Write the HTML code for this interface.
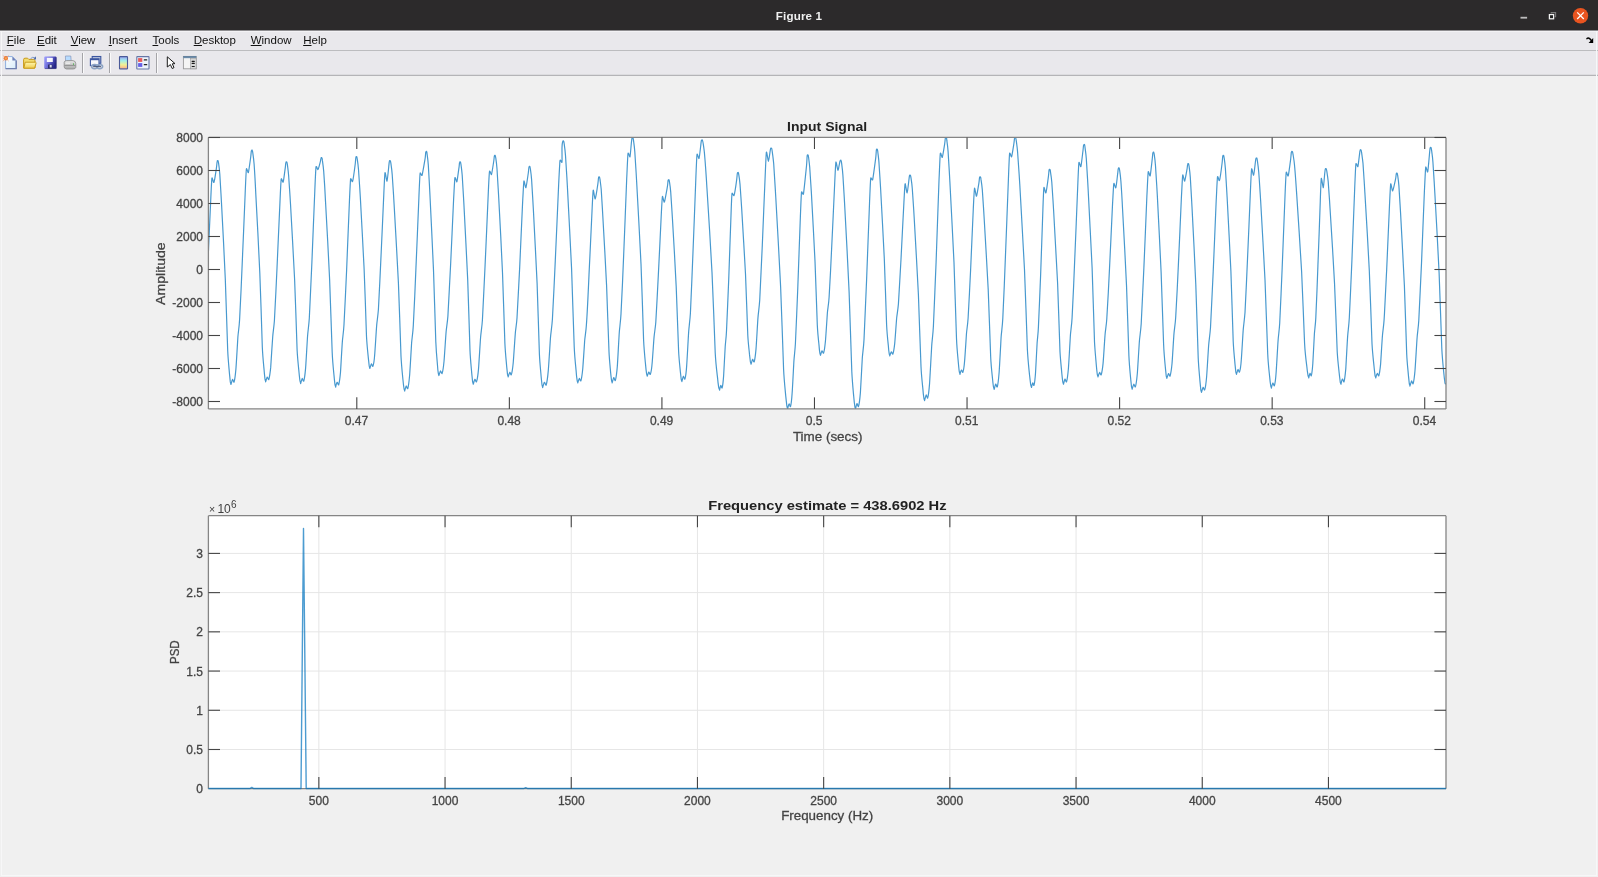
<!DOCTYPE html>
<html><head><meta charset="utf-8"><title>Figure 1</title>
<style>
html,body{margin:0;padding:0;}
body{width:1598px;height:877px;overflow:hidden;background:#f0f0f0;position:relative;font-family:"Liberation Sans",sans-serif;}
#titlebar{position:absolute;left:0;top:0;width:1598px;height:30px;background:#2c2a2b;}
#titlebar .t{position:absolute;left:0;width:1598px;top:9px;text-align:center;color:#f0f0f0;font-weight:bold;font-size:11.6px;letter-spacing:0.15px;line-height:14px;}
#menubar{position:absolute;left:0;top:30px;width:1598px;height:20px;background:#e9e8ec;border-top:0;}
#menubar .hl{position:absolute;left:0;top:1px;width:1598px;height:1px;background:#f3f2f5;}
#menubar .sh{position:absolute;left:0;top:0;width:1598px;height:1px;background:#8e8d90;}
#menubar span{position:absolute;top:4px;font-size:11.5px;line-height:12px;color:#111;}
#mline{position:absolute;left:0;top:50px;width:1598px;height:1px;background:#bcbcbf;}
#toolbar{position:absolute;left:0;top:51px;width:1598px;height:24px;background:#e9e8ec;}
#tline1{position:absolute;left:0;top:74px;width:1598px;height:1px;background:#dcdcdf;}
#tline2{position:absolute;left:0;top:75px;width:1598px;height:1px;background:#b4b4b7;}
#lcol{position:absolute;left:1px;top:31px;width:1px;height:845px;background:#f7f7f8;}
#bline{position:absolute;left:1px;top:875px;width:1596px;height:1px;background:#f7f7f8;}
#rcol{position:absolute;left:1596px;top:31px;width:1px;height:845px;background:#f7f7f8;}
svg{position:absolute;left:0;top:0;will-change:transform;}
#menubar,#titlebar{will-change:transform;}
svg text{font-family:"Liberation Sans",sans-serif;}
svg text.t{stroke:#4a4a4a;stroke-width:0.3px;}

.g{will-change:transform;}
</style></head><body>
<div id="titlebar"><div class="t">Figure 1</div></div>

<svg width="90" height="30" viewBox="0 0 90 30" style="position:absolute;left:1508px;top:0">
<rect x="12.5" y="16.8" width="6.6" height="1.8" fill="#bdbdbd"/>
<path d="M43.2 13.6 V12.6 H47.6 V16.8 H46.6" fill="none" stroke="#7a7a7a" stroke-width="1.1"/>
<rect x="41.4" y="14.6" width="4.2" height="4.2" fill="#1e1e1e" stroke="#f2f2f2" stroke-width="1.25"/>
<circle cx="72.5" cy="15.7" r="7.7" fill="#e95420"/>
<path d="M69.2 12.4 L75.8 19 M75.8 12.4 L69.2 19" stroke="#fff" stroke-width="1.25"/>
</svg>
<div id="menubar"><div class="sh"></div><div class="hl"></div>
<span style="left:6.8px"><u>F</u>ile</span>
<span style="left:37px"><u>E</u>dit</span>
<span style="left:70.7px"><u>V</u>iew</span>
<span style="left:108.7px"><u>I</u>nsert</span>
<span style="left:152.5px"><u>T</u>ools</span>
<span style="left:193.7px"><u>D</u>esktop</span>
<span style="left:250.7px"><u>W</u>indow</span>
<span style="left:303.2px"><u>H</u>elp</span>
</div>

<svg width="12" height="10" viewBox="0 0 12 10" style="position:absolute;left:1584px;top:35px">
<path d="M3 3.6 Q4.2 2.2 5.6 3.6 L7.4 5.6" fill="none" stroke="#000" stroke-width="1.5" stroke-linecap="round"/>
<path d="M9.2 3 L9.2 8 L4.6 8 Z" fill="#000"/>
</svg>
<div id="mline"></div>
<div id="toolbar"></div>
<div id="tline1"></div><div id="tline2"></div>
<div id="lcol"></div><div id="rcol"></div><div id="bline"></div>

<svg width="200" height="24" viewBox="0 0 200 24" style="position:absolute;left:0;top:51px">
<defs>
<linearGradient id="gpage" x1="0" y1="0" x2="1" y2="1"><stop offset="0" stop-color="#ffffff"/><stop offset="1" stop-color="#d8ecfa"/></linearGradient>
<linearGradient id="gfold" x1="0" y1="0" x2="0" y2="1"><stop offset="0" stop-color="#fff8b0"/><stop offset="1" stop-color="#f0cc50"/></linearGradient>
<linearGradient id="gflop" x1="0" y1="0" x2="1" y2="0.4"><stop offset="0" stop-color="#a4a4ff"/><stop offset="0.5" stop-color="#6a6ad8"/><stop offset="1" stop-color="#26268a"/></linearGradient>
<linearGradient id="gprn" x1="0" y1="0" x2="0" y2="1"><stop offset="0" stop-color="#e8e8e8"/><stop offset="1" stop-color="#a8a8a8"/></linearGradient>
<linearGradient id="gcbar" x1="0" y1="0" x2="0" y2="1"><stop offset="0" stop-color="#98a0f2"/><stop offset="0.33" stop-color="#a0f0ea"/><stop offset="0.66" stop-color="#f2f092"/><stop offset="0.88" stop-color="#f8c28e"/><stop offset="1" stop-color="#a08098"/></linearGradient>
<linearGradient id="gtb" x1="0" y1="0" x2="0" y2="1"><stop offset="0" stop-color="#4f7598"/><stop offset="1" stop-color="#7a98b4"/></linearGradient>
</defs>
<!-- new -->
<path d="M5.6 5.6 H12.4 L16.2 9.4 V17.6 H5.6 Z" fill="url(#gpage)" stroke="#8fb0e0" stroke-width="1"/>
<path d="M16.2 9.4 V17.6 H5.6" fill="none" stroke="#6f7fae" stroke-width="1.4"/>
<path d="M12.4 5.6 L16.2 9.4 H12.4 Z" fill="#7080b8"/>
<circle cx="5.8" cy="7.3" r="2.2" fill="#ee7a38"/>
<circle cx="5.8" cy="7.3" r="0.9" fill="#f8d040"/>
<path d="M2.8 4.4 L8.8 10.2 M8.8 4.4 L2.8 10.2" stroke="#f29a6a" stroke-width="0.6"/>
<!-- open -->
<path d="M23.6 8.6 Q23.6 7.2 25 7.2 H27.6 L28.8 8.4 H33.8 Q35 8.4 35 9.6 V17 H23.6 Z" fill="#f2dc70" stroke="#c99a1a" stroke-width="1"/>
<path d="M25.2 11.2 H35.6 Q36.4 11.4 36 12.4 L34.6 17.2 H23.8 Z" fill="url(#gfold)" stroke="#c99a1a" stroke-width="1"/>
<path d="M30.6 7.6 Q32.6 5.4 35 6.8" fill="none" stroke="#7f9ac8" stroke-width="1"/>
<path d="M36 5.2 L36 8.6 L33.4 8.2 Z" fill="#4a68a8"/>
<!-- save -->
<rect x="44.2" y="5.6" width="12.2" height="12.2" rx="1" fill="url(#gflop)"/>
<path d="M44.8 17.6 H56.2 V6.4" fill="none" stroke="#2a2a70" stroke-width="0.8" opacity="0.7"/>
<rect x="46.8" y="6.8" width="6" height="4.2" fill="#f8f8fc"/>
<rect x="48" y="13.6" width="4.4" height="3.8" fill="#2a2a6a"/>
<rect x="49.7" y="13.9" width="2" height="2.6" fill="#d8dcf0"/>
<!-- print -->
<path d="M65.4 5 H70.8 L71.2 10 H65.6 Z" fill="#b8dcff" stroke="#7a8ab0" stroke-width="0.6"/>
<path d="M64.2 11.2 Q64.6 9.6 66.6 9.6 H73 Q75.8 10 75.8 12.6 V16.4 Q75.4 18 73 18 H66.6 Q64.2 17.6 64.2 16 Z" fill="url(#gprn)" stroke="#8a8a8a" stroke-width="0.8"/>
<path d="M64.6 14.4 H75.4" stroke="#7a7a7a" stroke-width="0.7"/>
<path d="M65.6 12.2 L70 12.2" stroke="#f8f8f8" stroke-width="0.9"/>
<rect x="73" y="12.4" width="1" height="1.4" fill="#4cb04c"/>
<!-- sep -->
<rect x="109" y="2" width="1" height="20" fill="#a4a4a8"/>
<rect x="110" y="2" width="1" height="20" fill="#fafafa"/>
<rect x="82" y="2" width="1" height="20" fill="#a4a4a8"/>
<rect x="83" y="2" width="1" height="20" fill="#fafafa"/>
<rect x="156" y="2" width="1" height="20" fill="#a4a4a8"/>
<rect x="157" y="2" width="1" height="20" fill="#fafafa"/>
<!-- link/preview -->
<rect x="92.2" y="5.5" width="8.6" height="6.8" fill="#b4bed8" stroke="#3b56a0" stroke-width="1.1"/>
<rect x="90.4" y="7.8" width="8.6" height="6.8" fill="#f8f8fc" stroke="#3b56a0" stroke-width="1.1"/>
<rect x="90.4" y="7.8" width="8.6" height="1.4" fill="#3b56a0"/>
<ellipse cx="94.6" cy="15.6" rx="3" ry="2" fill="none" stroke="#8ea4c4" stroke-width="1.6"/>
<ellipse cx="99.6" cy="15.6" rx="3" ry="2" fill="none" stroke="#8ea4c4" stroke-width="1.6"/>
<path d="M93.2 15.6 H101" stroke="#3c4a6a" stroke-width="0.9"/>
<!-- colorbar -->
<rect x="119.5" y="5.6" width="8" height="12.4" rx="0.6" fill="url(#gcbar)" stroke="#4a5a98" stroke-width="1.1"/>
<!-- legend -->
<rect x="136.8" y="5.6" width="12.2" height="12.4" rx="0.5" fill="#eef4fc" stroke="#6676a6" stroke-width="1.1"/>
<rect x="138.1" y="7.1" width="4.2" height="3.8" fill="#e85a5a"/>
<rect x="138.1" y="12.1" width="4.2" height="3.8" fill="#6660e6"/>
<rect x="143.7" y="8.2" width="3.6" height="1.3" rx="0.6" fill="#222"/>
<rect x="143.7" y="13" width="3.6" height="1.3" rx="0.6" fill="#222"/>
<!-- arrow -->
<path d="M167.3 5.8 L167.3 16 L170.4 13.6 L172.2 17.5 L174 16.6 L172.3 12.8 L175 12.6 Z" fill="#fff" stroke="#1a1a1a" stroke-width="1" stroke-linejoin="round"/>
<!-- inspector -->
<rect x="183.4" y="5.4" width="12.8" height="12.4" fill="#f4f4f4" stroke="#9a9a9c" stroke-width="0.9"/>
<rect x="183.2" y="5.2" width="13.2" height="2" fill="url(#gtb)"/>
<rect x="190.6" y="7.2" width="5.6" height="10.6" fill="#d6d6d6" stroke="#9a9a9c" stroke-width="0.6"/>
<rect x="191.6" y="9.8" width="3.2" height="1.2" rx="0.5" fill="#1a1a1a"/>
<rect x="191.6" y="11.8" width="3.2" height="1.2" rx="0.5" fill="#1a1a1a"/>
<rect x="191.6" y="14.9" width="3.2" height="1.2" rx="0.5" fill="#1a1a1a"/>
</svg>
<svg width="1598" height="877" viewBox="0 0 1598 877" style="top:0">
<rect x="208.4" y="137.4" width="1237.6" height="271.55999999999995" fill="#fff"/>
<rect x="208.4" y="515.7" width="1237.6" height="273.0" fill="#fff"/>
<line x1="318.85" y1="515.70" x2="318.85" y2="788.70" stroke="#e6e6e6" stroke-width="1" />
<line x1="445.05" y1="515.70" x2="445.05" y2="788.70" stroke="#e6e6e6" stroke-width="1" />
<line x1="571.25" y1="515.70" x2="571.25" y2="788.70" stroke="#e6e6e6" stroke-width="1" />
<line x1="697.45" y1="515.70" x2="697.45" y2="788.70" stroke="#e6e6e6" stroke-width="1" />
<line x1="823.65" y1="515.70" x2="823.65" y2="788.70" stroke="#e6e6e6" stroke-width="1" />
<line x1="949.85" y1="515.70" x2="949.85" y2="788.70" stroke="#e6e6e6" stroke-width="1" />
<line x1="1076.05" y1="515.70" x2="1076.05" y2="788.70" stroke="#e6e6e6" stroke-width="1" />
<line x1="1202.25" y1="515.70" x2="1202.25" y2="788.70" stroke="#e6e6e6" stroke-width="1" />
<line x1="1328.45" y1="515.70" x2="1328.45" y2="788.70" stroke="#e6e6e6" stroke-width="1" />
<line x1="208.40" y1="749.49" x2="1446.00" y2="749.49" stroke="#e6e6e6" stroke-width="1" />
<line x1="208.40" y1="710.27" x2="1446.00" y2="710.27" stroke="#e6e6e6" stroke-width="1" />
<line x1="208.40" y1="671.06" x2="1446.00" y2="671.06" stroke="#e6e6e6" stroke-width="1" />
<line x1="208.40" y1="631.84" x2="1446.00" y2="631.84" stroke="#e6e6e6" stroke-width="1" />
<line x1="208.40" y1="592.62" x2="1446.00" y2="592.62" stroke="#e6e6e6" stroke-width="1" />
<line x1="208.40" y1="553.41" x2="1446.00" y2="553.41" stroke="#e6e6e6" stroke-width="1" />
<clipPath id="c1"><rect x="208.4" y="137.4" width="1237.6" height="271.55999999999995"/></clipPath>
<path d="M196.30 383.86C196.5 383.4 197.5 379.5 197.9 379.3C198.2 379.1 199.1 382.8 199.4 381.8C199.8 380.8 200.9 373.8 201.3 369.5C201.7 365.1 202.9 343.3 203.3 338.6C203.7 333.9 204.6 329.1 205.0 322.2C205.5 315.2 207.1 280.8 207.7 268.7C208.2 256.5 210.2 209.9 210.7 200.8C211.1 191.8 211.6 180.0 211.9 178.2C212.2 176.3 213.4 183.5 213.9 182.4C214.4 181.3 216.2 169.6 216.5 167.4C216.8 165.3 217.0 161.8 217.2 161.2C217.4 160.5 218.0 160.5 218.1 160.7C218.2 160.9 218.4 162.0 218.6 163.4C218.8 164.7 219.5 170.1 219.8 174.1C220.1 178.1 220.9 192.6 221.5 203.1C222.1 213.6 224.7 264.4 225.3 279.1C225.9 293.9 227.3 341.2 227.7 350.6C228.1 360.0 229.2 369.9 229.4 373.0C229.7 376.1 230.2 380.8 230.3 381.9C230.5 383.0 230.9 383.9 231.0 384.2C231.1 384.4 230.8 384.6 231.0 384.2C231.2 383.7 232.2 379.6 232.5 379.4C232.8 379.2 233.7 383.0 234.1 382.0C234.4 381.0 235.5 373.6 235.9 369.1C236.3 364.6 237.6 341.8 237.9 336.8C238.3 331.9 239.2 326.9 239.6 319.6C240.1 312.3 241.7 276.4 242.2 263.7C242.8 251.0 244.8 202.1 245.2 192.7C245.6 183.2 246.1 171.0 246.4 169.0C246.7 167.0 248.0 173.7 248.4 172.5C248.8 171.3 250.4 159.2 250.7 157.1C251.0 154.9 251.2 151.3 251.4 150.7C251.6 150.0 252.2 149.9 252.3 150.2C252.4 150.4 252.6 151.5 252.8 152.9C253.0 154.3 253.8 159.9 254.1 164.0C254.4 168.2 255.3 183.2 255.8 194.1C256.4 205.0 259.2 257.5 259.8 272.8C260.5 288.1 261.9 337.1 262.3 346.8C262.7 356.5 263.8 366.7 264.1 370.0C264.3 373.2 264.9 378.1 265.0 379.2C265.2 380.4 265.6 381.3 265.7 381.5C265.8 381.8 265.5 382.0 265.7 381.5C265.9 381.1 266.9 377.3 267.2 377.1C267.6 376.9 268.5 380.5 268.8 379.5C269.1 378.5 270.3 371.6 270.7 367.4C271.0 363.1 272.3 341.7 272.7 337.0C273.0 332.3 273.9 327.7 274.4 320.8C274.8 313.9 276.5 280.1 277.0 268.2C277.6 256.2 279.5 210.3 280.0 201.4C280.4 192.5 280.9 181.0 281.2 179.1C281.5 177.2 282.8 183.2 283.2 182.1C283.6 181.0 284.9 170.3 285.2 168.3C285.5 166.4 285.7 163.1 285.9 162.5C286.1 161.8 286.7 161.8 286.8 162.0C286.9 162.2 287.2 163.3 287.4 164.6C287.5 166.0 288.3 171.3 288.6 175.2C288.9 179.2 289.9 193.6 290.5 204.0C291.1 214.4 293.9 264.6 294.6 279.2C295.3 293.8 296.7 340.8 297.1 350.1C297.6 359.3 298.7 369.1 299.0 372.2C299.3 375.3 299.8 379.9 300.0 381.0C300.2 382.1 300.6 383.0 300.7 383.2C300.8 383.5 300.5 383.7 300.7 383.2C300.9 382.8 301.9 378.7 302.2 378.5C302.5 378.3 303.4 382.1 303.8 381.1C304.1 380.0 305.2 372.7 305.6 368.1C306.0 363.6 307.2 340.7 307.6 335.7C308.0 330.7 308.8 325.7 309.3 318.4C309.7 311.0 311.3 274.9 311.9 262.2C312.4 249.4 314.4 200.4 314.8 190.9C315.2 181.3 315.7 169.2 316.0 167.1C316.3 164.9 317.6 170.0 318.0 169.5C318.4 169.0 320.0 163.1 320.3 161.9C320.6 160.8 320.8 158.6 321.0 158.2C321.2 157.7 321.8 157.4 321.9 157.7C322.0 157.9 322.3 159.0 322.4 160.4C322.6 161.8 323.4 167.3 323.7 171.4C324.0 175.5 325.0 190.4 325.5 201.2C326.1 212.0 329.0 264.0 329.6 279.1C330.3 294.3 331.7 342.8 332.2 352.5C332.6 362.1 333.7 372.2 334.0 375.4C334.3 378.6 334.8 383.4 335.0 384.6C335.2 385.7 335.6 386.6 335.7 386.9C335.8 387.1 335.6 387.3 335.7 386.9C335.8 386.4 336.9 382.5 337.2 382.3C337.5 382.1 338.4 385.8 338.7 384.8C339.0 383.8 340.1 376.7 340.5 372.3C340.8 367.9 342.0 345.9 342.4 341.1C342.8 336.4 343.6 331.6 344.0 324.5C344.5 317.5 346.0 282.8 346.6 270.5C347.1 258.2 349.0 211.1 349.4 201.9C349.8 192.8 350.3 181.1 350.6 179.1C350.9 177.0 352.1 182.9 352.6 181.4C353.1 179.9 354.9 166.7 355.2 164.3C355.5 161.8 355.7 158.0 355.9 157.3C356.1 156.5 356.7 156.6 356.8 156.8C356.9 157.0 357.1 158.0 357.3 159.3C357.5 160.6 358.2 165.7 358.5 169.5C358.8 173.2 359.7 187.0 360.3 196.9C360.8 206.9 363.5 254.9 364.1 268.8C364.8 282.8 366.1 327.6 366.5 336.4C367.0 345.3 368.0 354.6 368.3 357.6C368.6 360.5 369.1 365.0 369.2 366.0C369.4 367.1 369.8 367.9 369.9 368.2C370.0 368.4 369.7 368.6 369.9 368.2C370.1 367.7 371.1 364.0 371.4 363.9C371.7 363.7 372.6 367.1 372.9 366.2C373.3 365.3 374.4 358.6 374.7 354.5C375.1 350.4 376.3 329.6 376.7 325.1C377.1 320.6 377.9 316.1 378.4 309.5C378.8 302.8 380.4 270.2 380.9 258.6C381.5 247.1 383.4 202.7 383.8 194.1C384.2 185.5 384.7 173.9 385.0 172.6C385.3 171.3 386.6 181.6 387.0 181.1C387.4 180.5 388.5 169.1 388.7 167.1C388.9 165.1 389.2 161.8 389.4 161.2C389.6 160.5 390.2 160.5 390.3 160.7C390.4 160.9 390.7 162.1 390.9 163.4C391.1 164.8 391.9 170.4 392.2 174.5C392.5 178.6 393.5 193.6 394.1 204.4C394.7 215.2 397.7 267.4 398.4 282.6C399.1 297.8 400.6 346.6 401.0 356.2C401.5 365.9 402.6 376.0 402.9 379.3C403.2 382.5 403.8 387.3 404.0 388.5C404.1 389.6 404.6 390.5 404.7 390.8C404.8 391.0 404.5 391.2 404.7 390.8C404.9 390.3 405.9 386.2 406.2 386.0C406.5 385.8 407.4 389.6 407.8 388.6C408.1 387.5 409.2 380.1 409.6 375.5C410.0 371.0 411.3 348.0 411.6 343.0C412.0 338.0 412.9 333.0 413.3 325.6C413.8 318.2 415.4 281.9 415.9 269.1C416.5 256.3 418.5 206.9 418.9 197.4C419.3 187.8 419.8 175.7 420.1 173.5C420.4 171.3 421.6 176.7 422.1 175.2C422.6 173.7 424.7 161.0 425.1 158.7C425.5 156.4 425.6 152.7 425.8 152.0C426.0 151.2 426.6 151.2 426.7 151.5C426.8 151.7 427.0 152.8 427.1 154.1C427.3 155.5 428.0 160.9 428.3 164.9C428.5 168.9 429.4 183.5 429.9 194.0C430.4 204.5 432.9 255.3 433.5 270.1C434.1 284.9 435.4 332.4 435.8 341.8C436.2 351.2 437.1 361.0 437.4 364.2C437.6 367.3 438.1 372.0 438.3 373.1C438.4 374.2 438.8 375.1 438.9 375.4C439.0 375.6 438.7 375.8 438.9 375.4C439.1 374.9 440.2 371.2 440.5 371.0C440.8 370.8 441.7 374.3 442.1 373.4C442.5 372.4 443.6 365.7 444.0 361.5C444.4 357.4 445.7 336.4 446.1 331.9C446.5 327.3 447.4 322.8 447.9 316.1C448.3 309.4 450.0 276.4 450.6 264.7C451.2 253.1 453.2 208.2 453.6 199.5C454.1 190.8 454.6 179.6 454.9 177.8C455.2 176.0 456.5 182.6 456.9 181.7C457.3 180.7 458.6 170.1 458.9 168.2C459.2 166.3 459.4 163.1 459.6 162.5C459.8 161.8 460.4 161.8 460.5 162.0C460.6 162.2 460.8 163.3 461.0 164.6C461.2 166.0 461.9 171.3 462.2 175.3C462.5 179.2 463.3 193.7 463.9 204.1C464.4 214.6 467.1 265.0 467.7 279.6C468.3 294.3 469.6 341.3 470.0 350.7C470.4 360.0 471.5 369.7 471.7 372.9C472.0 376.0 472.5 380.6 472.6 381.7C472.8 382.8 473.2 383.7 473.3 384.0C473.4 384.2 473.1 384.4 473.3 384.0C473.5 383.5 474.6 379.5 474.9 379.3C475.2 379.1 476.2 382.9 476.5 381.8C476.9 380.8 478.1 373.5 478.5 369.1C478.9 364.6 480.2 342.1 480.6 337.2C481.0 332.3 481.9 327.5 482.4 320.2C482.8 313.0 484.5 277.6 485.1 265.0C485.7 252.5 487.8 204.3 488.2 194.9C488.6 185.6 489.2 173.6 489.5 171.6C489.8 169.5 491.1 175.5 491.5 174.5C491.9 173.5 493.4 163.4 493.7 161.5C494.0 159.7 494.2 156.6 494.4 156.0C494.6 155.4 495.2 155.2 495.3 155.5C495.4 155.7 495.6 156.8 495.8 158.1C496.0 159.4 496.7 164.8 497.0 168.7C497.3 172.7 498.1 187.1 498.7 197.5C499.3 207.9 501.9 258.1 502.5 272.7C503.1 287.3 504.5 334.2 504.9 343.5C505.3 352.8 506.4 362.5 506.6 365.6C506.9 368.7 507.4 373.3 507.5 374.4C507.7 375.5 508.1 376.4 508.2 376.6C508.3 376.9 508.0 377.1 508.2 376.6C508.4 376.2 509.5 372.5 509.8 372.3C510.1 372.1 511.0 375.6 511.3 374.7C511.7 373.7 512.8 367.1 513.2 363.0C513.6 358.8 514.9 338.1 515.3 333.6C515.6 329.1 516.6 324.6 517.0 318.0C517.4 311.3 519.1 278.7 519.7 267.1C520.2 255.6 522.2 211.2 522.6 202.6C523.1 194.0 523.6 182.6 523.9 181.1C524.2 179.6 525.5 188.5 525.9 187.7C526.3 186.9 528.0 175.1 528.3 173.0C528.6 171.0 528.8 167.5 529.0 166.9C529.2 166.2 529.8 166.2 529.9 166.4C530.0 166.6 530.2 167.7 530.4 169.0C530.6 170.4 531.3 175.7 531.6 179.6C531.9 183.6 532.7 198.0 533.3 208.3C533.8 218.7 536.5 268.9 537.1 283.4C537.7 298.0 539.0 344.8 539.4 354.1C539.8 363.4 540.9 373.1 541.1 376.2C541.4 379.3 541.9 383.9 542.0 385.0C542.2 386.1 542.6 387.0 542.7 387.2C542.8 387.5 542.5 387.7 542.7 387.2C542.9 386.7 544.1 382.5 544.4 382.3C544.8 382.0 545.8 386.1 546.2 385.0C546.5 383.9 547.8 376.1 548.2 371.4C548.7 366.6 550.1 342.6 550.5 337.4C550.9 332.2 551.9 327.0 552.4 319.3C552.9 311.6 554.7 273.7 555.3 260.4C556.0 247.0 558.1 195.6 558.6 185.6C559.1 175.6 559.7 163.0 560.0 160.7C560.3 158.3 561.8 163.5 562.0 162.2C562.2 160.9 561.9 149.7 562.0 147.6C562.1 145.5 562.5 142.1 562.7 141.5C562.9 140.8 563.5 140.7 563.6 141.0C563.7 141.2 564.0 142.4 564.2 143.9C564.4 145.3 565.2 151.2 565.5 155.5C565.8 159.8 566.8 175.5 567.4 186.9C568.0 198.2 570.9 253.1 571.6 269.1C572.2 285.0 573.7 336.2 574.2 346.4C574.6 356.5 575.8 367.2 576.1 370.6C576.3 373.9 576.9 379.0 577.1 380.2C577.2 381.4 577.7 382.4 577.8 382.6C577.9 382.9 577.6 383.1 577.8 382.6C578.0 382.2 579.0 378.6 579.3 378.4C579.6 378.2 580.5 381.6 580.9 380.7C581.2 379.8 582.3 373.2 582.7 369.2C583.1 365.1 584.4 344.8 584.7 340.3C585.1 335.9 586.0 331.5 586.4 324.9C586.9 318.4 588.5 286.3 589.0 274.9C589.6 263.6 591.6 219.9 592.0 211.5C592.4 203.0 592.9 191.6 593.2 190.3C593.5 189.0 594.7 199.5 595.2 198.8C595.7 198.2 597.6 185.8 597.9 183.7C598.2 181.6 598.4 178.1 598.6 177.4C598.8 176.7 599.4 176.7 599.5 176.9C599.6 177.1 599.8 178.1 600.0 179.4C600.1 180.6 600.9 185.6 601.2 189.2C601.4 192.9 602.3 206.3 602.8 216.0C603.4 225.7 606.0 272.4 606.6 285.9C607.2 299.5 608.5 343.1 609.0 351.8C609.4 360.4 610.4 369.5 610.6 372.4C610.9 375.2 611.4 379.6 611.6 380.6C611.7 381.6 612.1 382.4 612.2 382.6C612.3 382.9 612.0 383.2 612.2 382.6C612.4 382.1 613.5 377.8 613.8 377.6C614.1 377.4 615.0 381.5 615.4 380.4C615.7 379.3 616.9 371.4 617.3 366.6C617.7 361.8 618.9 337.5 619.3 332.2C619.7 327.0 620.6 321.7 621.0 313.9C621.5 306.1 623.2 267.8 623.7 254.3C624.3 240.8 626.3 188.8 626.7 178.7C627.2 168.6 627.7 155.7 628.0 153.5C628.3 151.3 629.7 157.8 630.0 156.8C630.3 155.8 631.1 145.5 631.3 143.7C631.5 141.8 631.8 138.6 632.0 138.0C632.2 137.4 632.8 137.3 632.9 137.5C633.0 137.8 633.3 138.9 633.5 140.4C633.7 141.8 634.5 147.6 634.8 151.8C635.1 156.1 636.1 171.6 636.7 182.8C637.3 194.0 640.3 248.2 641.0 263.9C641.7 279.7 643.2 330.2 643.6 340.3C644.1 350.3 645.2 360.8 645.5 364.1C645.8 367.5 646.4 372.5 646.6 373.7C646.7 374.9 647.2 375.8 647.3 376.0C647.4 376.3 647.1 376.4 647.3 376.0C647.5 375.7 648.5 372.3 648.8 372.1C649.1 371.9 650.0 375.1 650.3 374.3C650.7 373.4 651.8 367.3 652.1 363.5C652.5 359.7 653.7 340.7 654.1 336.6C654.5 332.4 655.3 328.3 655.8 322.2C656.2 316.1 657.8 286.1 658.3 275.6C658.9 265.0 660.8 224.2 661.2 216.3C661.6 208.5 662.1 198.0 662.4 196.6C662.7 195.2 663.9 203.1 664.4 202.1C664.9 201.1 667.0 188.9 667.4 186.7C667.8 184.5 667.9 181.0 668.1 180.3C668.3 179.6 668.9 179.6 669.0 179.8C669.1 180.0 669.3 181.0 669.5 182.2C669.7 183.4 670.4 188.3 670.7 191.9C671.0 195.5 671.8 208.6 672.4 218.1C673.0 227.5 675.6 273.3 676.2 286.6C676.8 299.9 678.2 342.6 678.6 351.0C679.0 359.5 680.1 368.4 680.3 371.2C680.6 374.0 681.1 378.2 681.2 379.2C681.4 380.3 681.8 381.1 681.9 381.3C682.0 381.5 681.7 381.8 681.9 381.3C682.1 380.8 683.1 376.5 683.4 376.3C683.7 376.0 684.6 380.1 684.9 379.0C685.3 377.9 686.4 370.1 686.7 365.4C687.1 360.6 688.3 336.6 688.7 331.4C689.1 326.1 689.9 320.9 690.4 313.2C690.8 305.5 692.4 267.6 692.9 254.2C693.5 240.9 695.4 189.4 695.8 179.4C696.2 169.4 696.7 156.6 697.0 154.5C697.3 152.4 698.6 159.3 699.0 158.5C699.4 157.6 700.5 147.8 700.7 146.0C700.9 144.2 701.2 141.1 701.4 140.5C701.6 140.0 702.1 139.8 702.3 140.0C702.5 140.3 702.8 141.5 703.1 143.0C703.3 144.5 704.3 150.6 704.6 155.0C705.0 159.5 706.2 175.8 706.9 187.5C707.7 199.3 711.2 256.0 712.0 272.4C712.9 288.9 714.7 341.9 715.2 352.4C715.7 362.9 717.1 373.9 717.5 377.4C717.8 380.9 718.5 386.1 718.7 387.4C718.9 388.6 719.5 389.6 719.6 389.9C719.7 390.1 719.5 390.3 719.6 389.9C719.7 389.4 720.6 385.7 720.8 385.5C721.1 385.3 721.8 388.8 722.1 387.9C722.4 387.0 723.3 380.2 723.6 376.1C723.9 372.0 724.9 351.2 725.2 346.7C725.5 342.2 726.2 337.7 726.5 331.0C726.9 324.3 728.2 291.5 728.7 280.0C729.1 268.4 730.7 223.8 731.0 215.2C731.3 206.6 731.7 195.6 732.0 193.6C732.3 191.6 733.5 196.9 734.0 195.5C734.5 194.1 736.4 181.9 736.7 179.6C737.0 177.4 737.2 173.8 737.4 173.1C737.6 172.4 738.2 172.4 738.3 172.6C738.4 172.8 738.6 173.7 738.8 174.9C739.0 176.0 739.7 180.7 740.0 184.1C740.3 187.5 741.1 200.0 741.7 208.9C742.2 217.9 744.9 261.4 745.5 274.0C746.1 286.6 747.4 327.2 747.8 335.2C748.2 343.3 749.3 351.7 749.5 354.4C749.8 357.1 750.3 361.1 750.4 362.0C750.6 363.0 751.0 363.8 751.1 364.0C751.2 364.1 750.9 364.4 751.1 364.0C751.3 363.5 752.3 359.5 752.6 359.3C752.9 359.1 753.8 362.9 754.2 361.8C754.5 360.8 755.6 353.6 756.0 349.1C756.4 344.7 757.6 322.2 758.0 317.4C758.4 312.5 759.2 307.6 759.7 300.4C760.1 293.2 761.7 257.8 762.3 245.3C762.8 232.9 764.8 184.8 765.2 175.5C765.6 166.1 766.1 153.6 766.4 152.2C766.7 150.7 768.1 161.3 768.4 161.4C768.8 161.4 769.7 154.1 769.9 152.8C770.1 151.5 770.4 149.1 770.6 148.6C770.8 148.2 771.3 147.9 771.5 148.2C771.7 148.4 772.0 149.7 772.2 151.3C772.4 152.8 773.3 159.1 773.7 163.8C774.0 168.4 775.1 185.4 775.8 197.7C776.5 209.9 779.8 269.0 780.6 286.2C781.4 303.4 783.1 358.7 783.6 369.6C784.1 380.5 785.4 392.0 785.7 395.6C786.1 399.3 786.7 404.8 786.9 406.1C787.1 407.4 787.6 408.4 787.7 408.7C787.8 408.9 787.6 409.1 787.7 408.7C787.8 408.2 788.8 404.1 789.1 403.9C789.4 403.7 790.2 407.5 790.5 406.5C790.8 405.5 791.8 398.1 792.1 393.5C792.5 389.0 793.6 366.0 793.9 361.1C794.2 356.1 795.0 351.1 795.4 343.8C795.8 336.4 797.3 300.3 797.8 287.5C798.3 274.7 800.0 225.6 800.4 216.1C800.8 206.6 801.2 194.5 801.5 192.3C801.8 190.0 803.0 196.2 803.5 193.6C804.0 191.0 806.1 169.8 806.5 166.0C806.9 162.2 807.0 156.7 807.2 155.6C807.4 154.5 808.0 154.9 808.1 155.1C808.2 155.3 808.4 156.3 808.6 157.5C808.7 158.7 809.4 163.5 809.7 167.1C810.0 170.6 810.8 183.7 811.4 193.1C811.9 202.5 814.4 247.9 815.0 261.1C815.6 274.3 816.9 316.7 817.3 325.1C817.7 333.5 818.7 342.3 819.0 345.1C819.2 347.9 819.7 352.1 819.9 353.1C820.0 354.1 820.4 354.9 820.5 355.1C820.6 355.3 820.3 355.5 820.5 355.1C820.7 354.6 821.7 351.0 822.0 350.8C822.3 350.6 823.2 354.0 823.6 353.1C823.9 352.2 825.0 345.6 825.4 341.5C825.8 337.5 827.1 317.0 827.4 312.6C827.8 308.2 828.7 303.7 829.1 297.2C829.6 290.6 831.2 258.4 831.7 247.0C832.3 235.6 834.3 191.8 834.7 183.3C835.1 174.8 835.6 163.4 835.9 162.1C836.2 160.8 837.6 170.1 837.9 170.3C838.3 170.5 839.2 165.0 839.4 164.1C839.6 163.1 839.9 161.1 840.1 160.8C840.3 160.4 840.9 160.0 841.0 160.3C841.1 160.5 841.4 161.8 841.6 163.2C841.8 164.7 842.6 170.7 842.9 175.2C843.2 179.6 844.2 195.8 844.8 207.5C845.5 219.1 848.4 275.5 849.1 291.9C849.8 308.3 851.3 361.0 851.8 371.4C852.3 381.8 853.4 392.8 853.7 396.3C854.0 399.7 854.6 404.9 854.8 406.2C854.9 407.4 855.4 408.4 855.5 408.7C855.6 408.9 855.3 409.2 855.5 408.7C855.7 408.2 856.7 403.8 857.0 403.6C857.3 403.4 858.2 407.5 858.5 406.4C858.9 405.3 860.0 397.4 860.4 392.6C860.7 387.7 862.0 363.3 862.3 358.0C862.7 352.7 863.6 347.4 864.0 339.6C864.4 331.8 866.0 293.4 866.6 279.8C867.1 266.2 869.1 213.9 869.5 203.8C869.9 193.7 870.4 180.9 870.7 178.5C871.0 176.1 872.2 181.6 872.7 179.5C873.2 177.5 875.3 161.1 875.7 158.2C876.1 155.2 876.2 150.6 876.4 149.8C876.6 148.9 877.2 149.1 877.3 149.3C877.4 149.5 877.6 150.5 877.8 151.7C877.9 153.0 878.6 158.0 878.9 161.6C879.2 165.3 880.0 178.8 880.6 188.5C881.1 198.2 883.7 245.0 884.3 258.6C884.9 272.3 886.2 316.0 886.6 324.7C887.0 333.4 888.0 342.4 888.3 345.3C888.5 348.2 889.0 352.6 889.2 353.6C889.3 354.6 889.7 355.4 889.8 355.6C889.9 355.9 889.6 356.0 889.8 355.6C890.0 355.3 891.0 352.0 891.3 351.9C891.6 351.7 892.5 354.8 892.9 353.9C893.2 353.1 894.3 347.2 894.7 343.6C895.1 340.0 896.3 321.8 896.7 317.8C897.1 313.9 897.9 309.9 898.4 304.1C898.8 298.2 900.4 269.5 901.0 259.3C901.5 249.2 903.5 210.2 903.9 202.6C904.3 195.0 904.8 184.6 905.1 183.7C905.4 182.7 906.7 193.2 907.1 192.9C907.5 192.6 908.6 182.7 908.8 180.9C909.0 179.2 909.3 176.3 909.5 175.7C909.7 175.1 910.3 175.0 910.4 175.2C910.5 175.4 910.8 176.5 911.0 177.9C911.2 179.2 912.0 184.7 912.3 188.7C912.6 192.7 913.6 207.4 914.2 218.0C914.8 228.5 917.7 279.7 918.4 294.5C919.0 309.4 920.5 357.1 921.0 366.6C921.4 376.0 922.6 385.9 922.9 389.1C923.1 392.2 923.7 397.0 923.9 398.1C924.0 399.2 924.5 400.1 924.6 400.3C924.7 400.6 924.4 400.9 924.6 400.3C924.8 399.8 925.9 395.2 926.2 394.9C926.5 394.7 927.4 399.1 927.7 397.9C928.1 396.7 929.2 388.3 929.6 383.1C930.0 377.9 931.3 351.7 931.7 346.0C932.0 340.4 933.0 334.7 933.4 326.3C933.8 317.9 935.5 276.7 936.1 262.1C936.6 247.5 938.6 191.5 939.0 180.6C939.5 169.8 940.0 155.8 940.3 153.5C940.6 151.1 941.9 158.3 942.3 157.4C942.7 156.4 944.4 145.6 944.7 143.7C945.0 141.7 945.2 138.5 945.4 137.8C945.6 137.2 946.2 137.1 946.3 137.3C946.4 137.6 946.7 138.8 946.8 140.2C947.0 141.6 947.8 147.3 948.1 151.6C948.4 155.8 949.3 171.2 949.9 182.3C950.5 193.4 953.3 247.2 954.0 262.8C954.6 278.4 956.1 328.6 956.5 338.5C956.9 348.5 958.0 358.9 958.3 362.2C958.6 365.5 959.1 370.5 959.3 371.7C959.5 372.9 959.9 373.8 960.0 374.0C960.1 374.3 959.9 374.5 960.0 374.0C960.1 373.6 961.2 370.1 961.5 370.0C961.7 369.8 962.6 373.1 962.9 372.2C963.2 371.3 964.3 364.9 964.6 361.0C965.0 357.1 966.2 337.5 966.5 333.2C966.9 328.9 967.7 324.6 968.1 318.3C968.5 312.0 970.1 281.0 970.6 270.0C971.1 259.1 972.9 216.9 973.3 208.7C973.7 200.6 974.2 189.6 974.5 188.3C974.8 187.1 976.1 196.7 976.5 196.2C976.9 195.7 978.6 184.9 978.9 183.0C979.2 181.2 979.4 178.0 979.6 177.4C979.8 176.8 980.4 176.7 980.5 176.9C980.6 177.1 980.9 178.2 981.0 179.4C981.2 180.7 982.0 185.8 982.3 189.6C982.6 193.4 983.5 207.2 984.1 217.2C984.7 227.2 987.5 275.4 988.2 289.4C988.8 303.4 990.3 348.4 990.7 357.3C991.1 366.2 992.2 375.6 992.5 378.5C992.8 381.5 993.3 386.0 993.5 387.0C993.7 388.1 994.1 388.9 994.2 389.1C994.3 389.4 994.0 389.7 994.2 389.1C994.4 388.6 995.4 384.2 995.7 384.0C996.0 383.7 996.9 387.9 997.3 386.8C997.6 385.7 998.7 377.6 999.1 372.7C999.5 367.7 1000.8 342.7 1001.1 337.3C1001.5 331.9 1002.4 326.5 1002.8 318.4C1003.3 310.4 1004.9 271.1 1005.4 257.2C1006.0 243.3 1008.0 189.8 1008.4 179.4C1008.8 169.0 1009.3 155.7 1009.6 153.5C1009.9 151.2 1011.2 157.8 1011.6 156.8C1012.0 155.8 1013.6 145.4 1013.9 143.5C1014.2 141.6 1014.4 138.5 1014.6 137.8C1014.8 137.2 1015.3 137.1 1015.5 137.3C1015.7 137.6 1016.0 138.8 1016.2 140.3C1016.4 141.8 1017.3 147.9 1017.6 152.3C1018.0 156.8 1019.1 173.1 1019.8 184.8C1020.4 196.6 1023.7 253.3 1024.5 269.8C1025.3 286.3 1026.9 339.3 1027.4 349.8C1027.9 360.3 1029.2 371.3 1029.5 374.8C1029.9 378.3 1030.5 383.5 1030.7 384.7C1030.9 386.0 1031.4 387.0 1031.5 387.2C1031.6 387.5 1031.4 387.7 1031.5 387.2C1031.6 386.8 1032.5 383.1 1032.7 382.9C1033.0 382.7 1033.7 386.2 1034.0 385.3C1034.3 384.3 1035.2 377.5 1035.5 373.3C1035.8 369.1 1036.8 347.9 1037.1 343.3C1037.4 338.8 1038.1 334.2 1038.4 327.4C1038.8 320.6 1040.1 287.3 1040.6 275.5C1041.0 263.7 1042.6 218.4 1042.9 209.6C1043.2 200.9 1043.6 189.4 1043.9 187.7C1044.2 186.0 1045.5 194.0 1045.9 192.9C1046.4 191.8 1048.1 179.0 1048.4 176.7C1048.7 174.4 1048.9 170.7 1049.1 170.0C1049.3 169.3 1049.9 169.3 1050.0 169.5C1050.1 169.7 1050.4 170.8 1050.5 172.1C1050.7 173.3 1051.5 178.5 1051.8 182.3C1052.1 186.2 1053.0 200.1 1053.6 210.2C1054.1 220.3 1056.9 269.0 1057.6 283.2C1058.2 297.3 1059.6 342.8 1060.0 351.8C1060.5 360.8 1061.6 370.2 1061.8 373.2C1062.1 376.2 1062.6 380.7 1062.8 381.8C1063.0 382.9 1063.4 383.7 1063.5 384.0C1063.6 384.2 1063.3 384.4 1063.5 384.0C1063.7 383.5 1064.7 379.3 1065.0 379.1C1065.3 378.9 1066.2 382.8 1066.6 381.7C1066.9 380.7 1068.0 373.1 1068.4 368.5C1068.8 363.8 1070.1 340.4 1070.4 335.3C1070.8 330.2 1071.7 325.1 1072.1 317.6C1072.6 310.0 1074.2 273.1 1074.7 260.0C1075.3 247.0 1077.3 196.7 1077.7 187.0C1078.1 177.3 1078.6 164.7 1078.9 162.7C1079.2 160.6 1080.5 167.7 1080.9 166.6C1081.3 165.5 1082.6 153.5 1082.9 151.4C1083.2 149.2 1083.4 145.7 1083.6 145.1C1083.8 144.4 1084.4 144.3 1084.5 144.6C1084.6 144.8 1084.9 146.0 1085.0 147.3C1085.2 148.7 1086.0 154.4 1086.3 158.5C1086.6 162.6 1087.5 177.8 1088.1 188.7C1088.6 199.6 1091.4 252.2 1092.1 267.6C1092.7 282.9 1094.1 332.1 1094.5 341.8C1095.0 351.6 1096.1 361.8 1096.3 365.0C1096.6 368.3 1097.1 373.2 1097.3 374.3C1097.5 375.5 1097.9 376.4 1098.0 376.6C1098.1 376.9 1097.8 377.1 1098.0 376.6C1098.2 376.2 1099.3 372.6 1099.6 372.4C1099.9 372.2 1100.8 375.6 1101.2 374.7C1101.5 373.8 1102.7 367.2 1103.1 363.1C1103.5 359.1 1104.7 338.6 1105.1 334.2C1105.5 329.8 1106.4 325.3 1106.8 318.8C1107.3 312.2 1109.0 280.0 1109.5 268.6C1110.1 257.2 1112.1 213.4 1112.5 204.9C1113.0 196.4 1113.5 185.4 1113.8 183.7C1114.1 182.0 1115.4 188.6 1115.8 187.7C1116.2 186.7 1117.4 176.1 1117.6 174.2C1117.9 172.3 1118.1 169.1 1118.3 168.5C1118.5 167.8 1119.1 167.8 1119.2 168.0C1119.3 168.2 1119.5 169.3 1119.7 170.6C1119.9 172.0 1120.6 177.3 1120.9 181.2C1121.2 185.2 1122.1 199.6 1122.6 210.0C1123.2 220.3 1125.9 270.5 1126.5 285.1C1127.1 299.7 1128.5 346.5 1128.9 355.8C1129.3 365.1 1130.3 374.8 1130.6 377.9C1130.9 381.0 1131.4 385.6 1131.5 386.7C1131.7 387.8 1132.1 388.7 1132.2 389.0C1132.3 389.2 1132.0 389.4 1132.2 389.0C1132.4 388.5 1133.5 384.4 1133.8 384.2C1134.1 384.0 1135.0 387.8 1135.4 386.8C1135.8 385.7 1136.9 378.3 1137.3 373.8C1137.7 369.2 1139.0 346.2 1139.4 341.2C1139.8 336.2 1140.7 331.2 1141.2 323.8C1141.6 316.4 1143.3 280.2 1143.9 267.4C1144.5 254.6 1146.5 205.3 1146.9 195.8C1147.4 186.2 1147.9 173.9 1148.2 171.9C1148.5 169.9 1149.8 177.0 1150.2 175.8C1150.6 174.5 1151.9 161.7 1152.2 159.4C1152.5 157.1 1152.7 153.4 1152.9 152.7C1153.1 151.9 1153.7 151.9 1153.8 152.2C1153.9 152.4 1154.1 153.5 1154.3 154.9C1154.5 156.2 1155.2 161.7 1155.5 165.7C1155.8 169.7 1156.7 184.5 1157.3 195.1C1157.8 205.7 1160.5 257.0 1161.1 271.9C1161.8 286.8 1163.1 334.7 1163.6 344.2C1164.0 353.7 1165.0 363.6 1165.3 366.8C1165.6 369.9 1166.1 374.7 1166.2 375.8C1166.4 376.9 1166.8 377.8 1166.9 378.0C1167.0 378.3 1166.7 378.5 1166.9 378.0C1167.1 377.6 1168.2 373.8 1168.5 373.6C1168.8 373.4 1169.7 377.0 1170.1 376.0C1170.4 375.0 1171.6 368.1 1172.0 363.8C1172.4 359.6 1173.6 338.1 1174.0 333.4C1174.4 328.8 1175.3 324.1 1175.7 317.2C1176.2 310.3 1177.9 276.4 1178.4 264.4C1179.0 252.5 1181.0 206.4 1181.4 197.5C1181.9 188.6 1182.4 176.8 1182.7 175.2C1183.0 173.5 1184.3 181.7 1184.7 181.1C1185.1 180.5 1186.7 171.0 1187.0 169.4C1187.3 167.7 1187.5 164.7 1187.7 164.2C1187.9 163.6 1188.5 163.4 1188.6 163.7C1188.7 163.9 1188.9 165.0 1189.1 166.4C1189.3 167.8 1190.0 173.3 1190.3 177.4C1190.6 181.4 1191.4 196.3 1192.0 207.1C1192.6 217.8 1195.2 269.6 1195.8 284.7C1196.4 299.8 1197.8 348.2 1198.2 357.8C1198.6 367.4 1199.7 377.4 1199.9 380.6C1200.2 383.8 1200.7 388.6 1200.8 389.8C1201.0 390.9 1201.4 391.8 1201.5 392.0C1201.6 392.3 1201.3 392.5 1201.5 392.0C1201.7 391.6 1202.8 387.5 1203.1 387.3C1203.4 387.1 1204.3 390.9 1204.7 389.9C1205.1 388.9 1206.2 381.5 1206.6 377.0C1207.0 372.5 1208.3 349.7 1208.7 344.7C1209.1 339.8 1210.0 334.8 1210.5 327.5C1210.9 320.2 1212.6 284.3 1213.2 271.6C1213.8 258.9 1215.8 210.0 1216.2 200.6C1216.7 191.1 1217.2 178.9 1217.5 176.9C1217.8 174.9 1219.0 181.8 1219.5 180.4C1220.0 179.0 1221.8 165.5 1222.1 163.0C1222.4 160.6 1222.6 156.7 1222.8 156.0C1223.0 155.2 1223.6 155.3 1223.7 155.5C1223.8 155.7 1224.0 156.8 1224.2 158.1C1224.4 159.4 1225.1 164.7 1225.4 168.6C1225.7 172.5 1226.5 186.7 1227.1 197.0C1227.6 207.3 1230.3 256.9 1230.9 271.3C1231.5 285.7 1232.8 332.1 1233.2 341.3C1233.6 350.4 1234.7 360.1 1234.9 363.1C1235.2 366.2 1235.7 370.8 1235.8 371.9C1236.0 373.0 1236.4 373.8 1236.5 374.0C1236.6 374.3 1236.3 374.5 1236.5 374.0C1236.7 373.6 1237.7 369.7 1238.0 369.5C1238.3 369.3 1239.2 373.0 1239.5 372.0C1239.9 371.0 1241.0 364.0 1241.3 359.7C1241.7 355.4 1242.9 333.6 1243.3 328.9C1243.7 324.2 1244.5 319.5 1245.0 312.5C1245.4 305.6 1247.0 271.3 1247.5 259.2C1248.1 247.1 1250.0 200.6 1250.4 191.5C1250.8 182.5 1251.3 170.6 1251.6 169.0C1251.9 167.3 1253.2 175.7 1253.6 175.2C1254.0 174.7 1255.0 165.3 1255.2 163.7C1255.4 162.0 1255.7 159.1 1255.9 158.6C1256.1 158.0 1256.7 157.8 1256.8 158.1C1256.9 158.3 1257.2 159.4 1257.4 160.8C1257.6 162.2 1258.4 167.8 1258.7 171.8C1259.1 175.9 1260.0 190.9 1260.7 201.7C1261.3 212.5 1264.3 264.7 1265.0 279.8C1265.7 295.0 1267.2 343.7 1267.7 353.4C1268.1 363.0 1269.3 373.1 1269.6 376.4C1269.9 379.6 1270.5 384.4 1270.7 385.5C1270.8 386.7 1271.3 387.6 1271.4 387.8C1271.5 388.1 1271.3 388.3 1271.4 387.8C1271.5 387.4 1272.6 383.3 1272.9 383.1C1273.2 382.9 1274.0 386.7 1274.4 385.7C1274.7 384.7 1275.8 377.3 1276.1 372.8C1276.5 368.3 1277.7 345.4 1278.1 340.5C1278.4 335.5 1279.3 330.6 1279.7 323.3C1280.1 315.9 1281.7 280.0 1282.2 267.3C1282.7 254.6 1284.6 205.7 1285.0 196.3C1285.4 186.8 1285.9 174.6 1286.2 172.6C1286.5 170.5 1287.8 177.2 1288.2 175.8C1288.7 174.4 1290.4 161.2 1290.7 158.9C1291.0 156.5 1291.2 152.7 1291.4 152.0C1291.6 151.2 1292.1 151.2 1292.3 151.5C1292.5 151.7 1292.8 152.8 1293.0 154.2C1293.2 155.5 1294.2 161.0 1294.5 165.0C1294.9 169.1 1296.0 183.8 1296.7 194.4C1297.4 205.1 1300.8 256.4 1301.6 271.3C1302.4 286.3 1304.1 334.2 1304.6 343.7C1305.1 353.2 1306.4 363.2 1306.8 366.3C1307.1 369.5 1307.8 374.3 1308.0 375.4C1308.2 376.5 1308.7 377.4 1308.8 377.7C1308.9 377.9 1308.7 378.1 1308.8 377.7C1308.9 377.2 1309.8 373.5 1310.0 373.3C1310.3 373.1 1311.0 376.6 1311.3 375.7C1311.6 374.7 1312.5 367.9 1312.8 363.7C1313.1 359.5 1314.1 338.4 1314.4 333.8C1314.7 329.3 1315.5 324.7 1315.8 317.9C1316.2 311.1 1317.5 277.9 1317.9 266.1C1318.4 254.4 1320.0 209.2 1320.3 200.4C1320.6 191.6 1321.0 179.8 1321.3 178.5C1321.6 177.2 1323.0 188.1 1323.3 187.7C1323.6 187.3 1324.4 176.5 1324.6 174.7C1324.8 172.8 1325.1 169.7 1325.3 169.1C1325.5 168.5 1326.0 168.4 1326.2 168.6C1326.4 168.8 1326.6 169.9 1326.8 171.2C1327.0 172.5 1327.8 177.7 1328.2 181.5C1328.5 185.3 1329.5 199.4 1330.1 209.5C1330.8 219.6 1333.8 268.5 1334.5 282.7C1335.2 296.9 1336.8 342.6 1337.2 351.6C1337.7 360.7 1338.9 370.2 1339.2 373.2C1339.5 376.2 1340.1 380.7 1340.2 381.8C1340.4 382.9 1340.9 383.7 1341.0 384.0C1341.1 384.2 1340.9 384.4 1341.0 384.0C1341.1 383.5 1342.2 379.3 1342.5 379.1C1342.8 378.9 1343.7 382.8 1344.0 381.8C1344.3 380.7 1345.4 373.2 1345.8 368.6C1346.1 363.9 1347.3 340.6 1347.7 335.6C1348.1 330.5 1348.9 325.4 1349.3 318.0C1349.8 310.5 1351.3 273.8 1351.9 260.8C1352.4 247.8 1354.3 197.9 1354.7 188.2C1355.1 178.5 1355.6 166.1 1355.9 164.0C1356.2 161.8 1357.6 167.5 1357.9 166.6C1358.2 165.7 1359.2 156.9 1359.4 155.3C1359.6 153.7 1359.9 150.8 1360.1 150.3C1360.3 149.7 1360.8 149.5 1361.0 149.8C1361.2 150.0 1361.4 151.1 1361.6 152.5C1361.8 153.9 1362.6 159.4 1363.0 163.4C1363.3 167.5 1364.3 182.3 1364.9 193.1C1365.6 203.8 1368.6 255.5 1369.3 270.5C1370.0 285.6 1371.6 333.9 1372.0 343.5C1372.5 353.0 1373.7 363.1 1374.0 366.3C1374.3 369.4 1374.9 374.2 1375.0 375.4C1375.2 376.5 1375.7 377.4 1375.8 377.7C1375.9 377.9 1375.7 378.1 1375.8 377.7C1375.9 377.2 1377.0 373.6 1377.3 373.4C1377.6 373.2 1378.5 376.6 1378.8 375.7C1379.1 374.8 1380.2 368.2 1380.6 364.1C1380.9 360.0 1382.1 339.5 1382.5 335.0C1382.9 330.6 1383.7 326.1 1384.1 319.6C1384.6 313.0 1386.1 280.6 1386.7 269.2C1387.2 257.8 1389.1 213.8 1389.5 205.3C1389.9 196.8 1390.4 185.4 1390.7 184.0C1391.0 182.6 1392.2 191.4 1392.7 190.9C1393.2 190.4 1395.2 180.7 1395.6 178.9C1396.0 177.2 1396.1 174.3 1396.3 173.7C1396.5 173.1 1397.1 173.0 1397.2 173.2C1397.3 173.4 1397.5 174.5 1397.7 175.7C1397.9 177.0 1398.6 182.2 1398.9 185.9C1399.2 189.7 1400.0 203.6 1400.6 213.6C1401.1 223.6 1403.8 271.9 1404.4 285.9C1405.0 299.9 1406.3 345.0 1406.7 353.9C1407.1 362.9 1408.2 372.2 1408.4 375.2C1408.7 378.2 1409.2 382.7 1409.3 383.7C1409.5 384.8 1409.9 385.6 1410.0 385.8C1410.1 386.1 1409.8 386.3 1410.0 385.8C1410.2 385.4 1411.3 381.3 1411.6 381.0C1411.9 380.8 1412.8 384.7 1413.1 383.7C1413.5 382.6 1414.6 375.1 1415.0 370.5C1415.4 366.0 1416.7 342.8 1417.1 337.8C1417.4 332.7 1418.4 327.7 1418.8 320.3C1419.2 312.8 1420.9 276.3 1421.5 263.4C1422.0 250.6 1424.0 200.9 1424.4 191.3C1424.9 181.7 1425.4 169.2 1425.7 167.3C1426.0 165.3 1427.3 173.1 1427.7 171.9C1428.1 170.6 1429.2 157.3 1429.4 155.0C1429.6 152.6 1429.9 148.8 1430.1 148.1C1430.3 147.3 1430.9 147.3 1431.0 147.6C1431.1 147.8 1431.4 149.0 1431.6 150.4C1431.8 151.8 1432.6 157.5 1432.9 161.7C1433.2 165.9 1434.2 181.3 1434.8 192.5C1435.5 203.6 1438.4 257.2 1439.1 272.8C1439.8 288.4 1441.3 338.5 1441.8 348.4C1442.3 358.3 1443.4 368.7 1443.7 372.0C1444.0 375.3 1444.6 380.3 1444.8 381.5C1444.9 382.7 1445.0 384.0 1445.5 383.9C1446.0 383.8 1449.5 380.9 1450.0 380.5" fill="none" stroke="#0072bd" stroke-opacity="0.72" stroke-width="1.2" stroke-linejoin="round" clip-path="url(#c1)"/>
<line x1="208.40" y1="137.40" x2="1446.00" y2="137.40" stroke="#858585" stroke-width="1.3" />
<line x1="208.40" y1="408.96" x2="1446.00" y2="408.96" stroke="#858585" stroke-width="1.3" />
<line x1="208.40" y1="137.40" x2="208.40" y2="408.96" stroke="#858585" stroke-width="1.3" />
<line x1="1446.00" y1="137.40" x2="1446.00" y2="408.96" stroke="#858585" stroke-width="1.3" />
<line x1="208.40" y1="515.70" x2="1446.00" y2="515.70" stroke="#858585" stroke-width="1.3" />
<line x1="208.40" y1="788.70" x2="1446.00" y2="788.70" stroke="#858585" stroke-width="1.3" />
<line x1="208.40" y1="515.70" x2="208.40" y2="788.70" stroke="#858585" stroke-width="1.3" />
<line x1="1446.00" y1="515.70" x2="1446.00" y2="788.70" stroke="#858585" stroke-width="1.3" />
<path d="M208.4 788.45 L250.2 788.45 L251.8 787.4 L253.4 788.45 L301.0 788.45 L303.5 528.4 L306.2 788.45 L524.0 788.45 L525.7 787.6 L527.4 788.45 L1446.0 788.45" fill="none" stroke="#0072bd" stroke-opacity="0.7" stroke-width="1.4" stroke-linejoin="round"/>
<line x1="356.80" y1="408.96" x2="356.80" y2="397.36" stroke="#454545" stroke-width="1.1" />
<line x1="356.80" y1="137.40" x2="356.80" y2="149.00" stroke="#454545" stroke-width="1.1" />
<text class="t" x="356.50" y="424.90" font-size="12" text-anchor="middle" font-weight="normal" fill="#404040" >0.47</text>
<line x1="509.36" y1="408.96" x2="509.36" y2="397.36" stroke="#454545" stroke-width="1.1" />
<line x1="509.36" y1="137.40" x2="509.36" y2="149.00" stroke="#454545" stroke-width="1.1" />
<text class="t" x="509.06" y="424.90" font-size="12" text-anchor="middle" font-weight="normal" fill="#404040" >0.48</text>
<line x1="661.92" y1="408.96" x2="661.92" y2="397.36" stroke="#454545" stroke-width="1.1" />
<line x1="661.92" y1="137.40" x2="661.92" y2="149.00" stroke="#454545" stroke-width="1.1" />
<text class="t" x="661.62" y="424.90" font-size="12" text-anchor="middle" font-weight="normal" fill="#404040" >0.49</text>
<line x1="814.48" y1="408.96" x2="814.48" y2="397.36" stroke="#454545" stroke-width="1.1" />
<line x1="814.48" y1="137.40" x2="814.48" y2="149.00" stroke="#454545" stroke-width="1.1" />
<text class="t" x="814.18" y="424.90" font-size="12" text-anchor="middle" font-weight="normal" fill="#404040" >0.5</text>
<line x1="967.04" y1="408.96" x2="967.04" y2="397.36" stroke="#454545" stroke-width="1.1" />
<line x1="967.04" y1="137.40" x2="967.04" y2="149.00" stroke="#454545" stroke-width="1.1" />
<text class="t" x="966.74" y="424.90" font-size="12" text-anchor="middle" font-weight="normal" fill="#404040" >0.51</text>
<line x1="1119.60" y1="408.96" x2="1119.60" y2="397.36" stroke="#454545" stroke-width="1.1" />
<line x1="1119.60" y1="137.40" x2="1119.60" y2="149.00" stroke="#454545" stroke-width="1.1" />
<text class="t" x="1119.30" y="424.90" font-size="12" text-anchor="middle" font-weight="normal" fill="#404040" >0.52</text>
<line x1="1272.16" y1="408.96" x2="1272.16" y2="397.36" stroke="#454545" stroke-width="1.1" />
<line x1="1272.16" y1="137.40" x2="1272.16" y2="149.00" stroke="#454545" stroke-width="1.1" />
<text class="t" x="1271.86" y="424.90" font-size="12" text-anchor="middle" font-weight="normal" fill="#404040" >0.53</text>
<line x1="1424.72" y1="408.96" x2="1424.72" y2="397.36" stroke="#454545" stroke-width="1.1" />
<line x1="1424.72" y1="137.40" x2="1424.72" y2="149.00" stroke="#454545" stroke-width="1.1" />
<text class="t" x="1424.42" y="424.90" font-size="12" text-anchor="middle" font-weight="normal" fill="#404040" >0.54</text>
<line x1="208.40" y1="401.50" x2="220.00" y2="401.50" stroke="#454545" stroke-width="1.1" />
<line x1="1446.00" y1="401.50" x2="1434.40" y2="401.50" stroke="#454545" stroke-width="1.1" />
<text class="t" x="203.00" y="406.00" font-size="12" text-anchor="end" font-weight="normal" fill="#404040" >-8000</text>
<line x1="208.40" y1="368.50" x2="220.00" y2="368.50" stroke="#454545" stroke-width="1.1" />
<line x1="1446.00" y1="368.50" x2="1434.40" y2="368.50" stroke="#454545" stroke-width="1.1" />
<text class="t" x="203.00" y="373.00" font-size="12" text-anchor="end" font-weight="normal" fill="#404040" >-6000</text>
<line x1="208.40" y1="335.50" x2="220.00" y2="335.50" stroke="#454545" stroke-width="1.1" />
<line x1="1446.00" y1="335.50" x2="1434.40" y2="335.50" stroke="#454545" stroke-width="1.1" />
<text class="t" x="203.00" y="340.00" font-size="12" text-anchor="end" font-weight="normal" fill="#404040" >-4000</text>
<line x1="208.40" y1="302.50" x2="220.00" y2="302.50" stroke="#454545" stroke-width="1.1" />
<line x1="1446.00" y1="302.50" x2="1434.40" y2="302.50" stroke="#454545" stroke-width="1.1" />
<text class="t" x="203.00" y="307.00" font-size="12" text-anchor="end" font-weight="normal" fill="#404040" >-2000</text>
<line x1="208.40" y1="269.50" x2="220.00" y2="269.50" stroke="#454545" stroke-width="1.1" />
<line x1="1446.00" y1="269.50" x2="1434.40" y2="269.50" stroke="#454545" stroke-width="1.1" />
<text class="t" x="203.00" y="274.00" font-size="12" text-anchor="end" font-weight="normal" fill="#404040" >0</text>
<line x1="208.40" y1="236.50" x2="220.00" y2="236.50" stroke="#454545" stroke-width="1.1" />
<line x1="1446.00" y1="236.50" x2="1434.40" y2="236.50" stroke="#454545" stroke-width="1.1" />
<text class="t" x="203.00" y="241.00" font-size="12" text-anchor="end" font-weight="normal" fill="#404040" >2000</text>
<line x1="208.40" y1="203.50" x2="220.00" y2="203.50" stroke="#454545" stroke-width="1.1" />
<line x1="1446.00" y1="203.50" x2="1434.40" y2="203.50" stroke="#454545" stroke-width="1.1" />
<text class="t" x="203.00" y="208.00" font-size="12" text-anchor="end" font-weight="normal" fill="#404040" >4000</text>
<line x1="208.40" y1="170.50" x2="220.00" y2="170.50" stroke="#454545" stroke-width="1.1" />
<line x1="1446.00" y1="170.50" x2="1434.40" y2="170.50" stroke="#454545" stroke-width="1.1" />
<text class="t" x="203.00" y="175.00" font-size="12" text-anchor="end" font-weight="normal" fill="#404040" >6000</text>
<line x1="208.40" y1="137.50" x2="220.00" y2="137.50" stroke="#454545" stroke-width="1.1" />
<line x1="1446.00" y1="137.50" x2="1434.40" y2="137.50" stroke="#454545" stroke-width="1.1" />
<text class="t" x="203.00" y="142.00" font-size="12" text-anchor="end" font-weight="normal" fill="#404040" >8000</text>
<text class="b" x="827.10" y="131.10" font-size="13.2" text-anchor="middle" font-weight="bold" fill="#222222" textLength="80" lengthAdjust="spacingAndGlyphs" >Input Signal</text>
<text class="t" x="827.70" y="440.60" font-size="13.2" text-anchor="middle" font-weight="normal" fill="#404040" textLength="69.6" lengthAdjust="spacingAndGlyphs" >Time (secs)</text>
<text class="t" x="0.00" y="0.00" font-size="13.2" text-anchor="middle" font-weight="normal" fill="#404040" textLength="62.6" lengthAdjust="spacingAndGlyphs" transform="translate(165.1 273.6) rotate(-90)">Amplitude</text>
<line x1="318.85" y1="788.70" x2="318.85" y2="777.10" stroke="#454545" stroke-width="1.1" />
<line x1="318.85" y1="515.70" x2="318.85" y2="527.30" stroke="#454545" stroke-width="1.1" />
<text class="t" x="318.85" y="804.60" font-size="12" text-anchor="middle" font-weight="normal" fill="#404040" >500</text>
<line x1="445.05" y1="788.70" x2="445.05" y2="777.10" stroke="#454545" stroke-width="1.1" />
<line x1="445.05" y1="515.70" x2="445.05" y2="527.30" stroke="#454545" stroke-width="1.1" />
<text class="t" x="445.05" y="804.60" font-size="12" text-anchor="middle" font-weight="normal" fill="#404040" >1000</text>
<line x1="571.25" y1="788.70" x2="571.25" y2="777.10" stroke="#454545" stroke-width="1.1" />
<line x1="571.25" y1="515.70" x2="571.25" y2="527.30" stroke="#454545" stroke-width="1.1" />
<text class="t" x="571.25" y="804.60" font-size="12" text-anchor="middle" font-weight="normal" fill="#404040" >1500</text>
<line x1="697.45" y1="788.70" x2="697.45" y2="777.10" stroke="#454545" stroke-width="1.1" />
<line x1="697.45" y1="515.70" x2="697.45" y2="527.30" stroke="#454545" stroke-width="1.1" />
<text class="t" x="697.45" y="804.60" font-size="12" text-anchor="middle" font-weight="normal" fill="#404040" >2000</text>
<line x1="823.65" y1="788.70" x2="823.65" y2="777.10" stroke="#454545" stroke-width="1.1" />
<line x1="823.65" y1="515.70" x2="823.65" y2="527.30" stroke="#454545" stroke-width="1.1" />
<text class="t" x="823.65" y="804.60" font-size="12" text-anchor="middle" font-weight="normal" fill="#404040" >2500</text>
<line x1="949.85" y1="788.70" x2="949.85" y2="777.10" stroke="#454545" stroke-width="1.1" />
<line x1="949.85" y1="515.70" x2="949.85" y2="527.30" stroke="#454545" stroke-width="1.1" />
<text class="t" x="949.85" y="804.60" font-size="12" text-anchor="middle" font-weight="normal" fill="#404040" >3000</text>
<line x1="1076.05" y1="788.70" x2="1076.05" y2="777.10" stroke="#454545" stroke-width="1.1" />
<line x1="1076.05" y1="515.70" x2="1076.05" y2="527.30" stroke="#454545" stroke-width="1.1" />
<text class="t" x="1076.05" y="804.60" font-size="12" text-anchor="middle" font-weight="normal" fill="#404040" >3500</text>
<line x1="1202.25" y1="788.70" x2="1202.25" y2="777.10" stroke="#454545" stroke-width="1.1" />
<line x1="1202.25" y1="515.70" x2="1202.25" y2="527.30" stroke="#454545" stroke-width="1.1" />
<text class="t" x="1202.25" y="804.60" font-size="12" text-anchor="middle" font-weight="normal" fill="#404040" >4000</text>
<line x1="1328.45" y1="788.70" x2="1328.45" y2="777.10" stroke="#454545" stroke-width="1.1" />
<line x1="1328.45" y1="515.70" x2="1328.45" y2="527.30" stroke="#454545" stroke-width="1.1" />
<text class="t" x="1328.45" y="804.60" font-size="12" text-anchor="middle" font-weight="normal" fill="#404040" >4500</text>
<text class="t" x="203.00" y="793.20" font-size="12" text-anchor="end" font-weight="normal" fill="#404040" >0</text>
<line x1="208.40" y1="749.49" x2="220.00" y2="749.49" stroke="#454545" stroke-width="1.1" />
<line x1="1446.00" y1="749.49" x2="1434.40" y2="749.49" stroke="#454545" stroke-width="1.1" />
<text class="t" x="203.00" y="753.99" font-size="12" text-anchor="end" font-weight="normal" fill="#404040" >0.5</text>
<line x1="208.40" y1="710.27" x2="220.00" y2="710.27" stroke="#454545" stroke-width="1.1" />
<line x1="1446.00" y1="710.27" x2="1434.40" y2="710.27" stroke="#454545" stroke-width="1.1" />
<text class="t" x="203.00" y="714.77" font-size="12" text-anchor="end" font-weight="normal" fill="#404040" >1</text>
<line x1="208.40" y1="671.06" x2="220.00" y2="671.06" stroke="#454545" stroke-width="1.1" />
<line x1="1446.00" y1="671.06" x2="1434.40" y2="671.06" stroke="#454545" stroke-width="1.1" />
<text class="t" x="203.00" y="675.56" font-size="12" text-anchor="end" font-weight="normal" fill="#404040" >1.5</text>
<line x1="208.40" y1="631.84" x2="220.00" y2="631.84" stroke="#454545" stroke-width="1.1" />
<line x1="1446.00" y1="631.84" x2="1434.40" y2="631.84" stroke="#454545" stroke-width="1.1" />
<text class="t" x="203.00" y="636.34" font-size="12" text-anchor="end" font-weight="normal" fill="#404040" >2</text>
<line x1="208.40" y1="592.62" x2="220.00" y2="592.62" stroke="#454545" stroke-width="1.1" />
<line x1="1446.00" y1="592.62" x2="1434.40" y2="592.62" stroke="#454545" stroke-width="1.1" />
<text class="t" x="203.00" y="597.12" font-size="12" text-anchor="end" font-weight="normal" fill="#404040" >2.5</text>
<line x1="208.40" y1="553.41" x2="220.00" y2="553.41" stroke="#454545" stroke-width="1.1" />
<line x1="1446.00" y1="553.41" x2="1434.40" y2="553.41" stroke="#454545" stroke-width="1.1" />
<text class="t" x="203.00" y="557.91" font-size="12" text-anchor="end" font-weight="normal" fill="#404040" >3</text>
<text class="b" x="827.40" y="509.70" font-size="13.2" text-anchor="middle" font-weight="bold" fill="#222222" textLength="238.4" lengthAdjust="spacingAndGlyphs" >Frequency estimate = 438.6902 Hz</text>
<text class="t" x="827.20" y="820.10" font-size="13.2" text-anchor="middle" font-weight="normal" fill="#404040" textLength="92.1" lengthAdjust="spacingAndGlyphs" >Frequency (Hz)</text>
<text class="t" x="0.00" y="0.00" font-size="13.2" text-anchor="middle" font-weight="normal" fill="#404040" textLength="23.7" lengthAdjust="spacingAndGlyphs" transform="translate(178.9 652.2) rotate(-90)">PSD</text>
<text x="208.9" y="512.6" font-size="10.5" fill="#404040">×</text>
<text x="217.4" y="512.5" font-size="12" fill="#404040">10</text>
<text x="230.9" y="507.5" font-size="10" fill="#404040">6</text>
</svg>
</body></html>
